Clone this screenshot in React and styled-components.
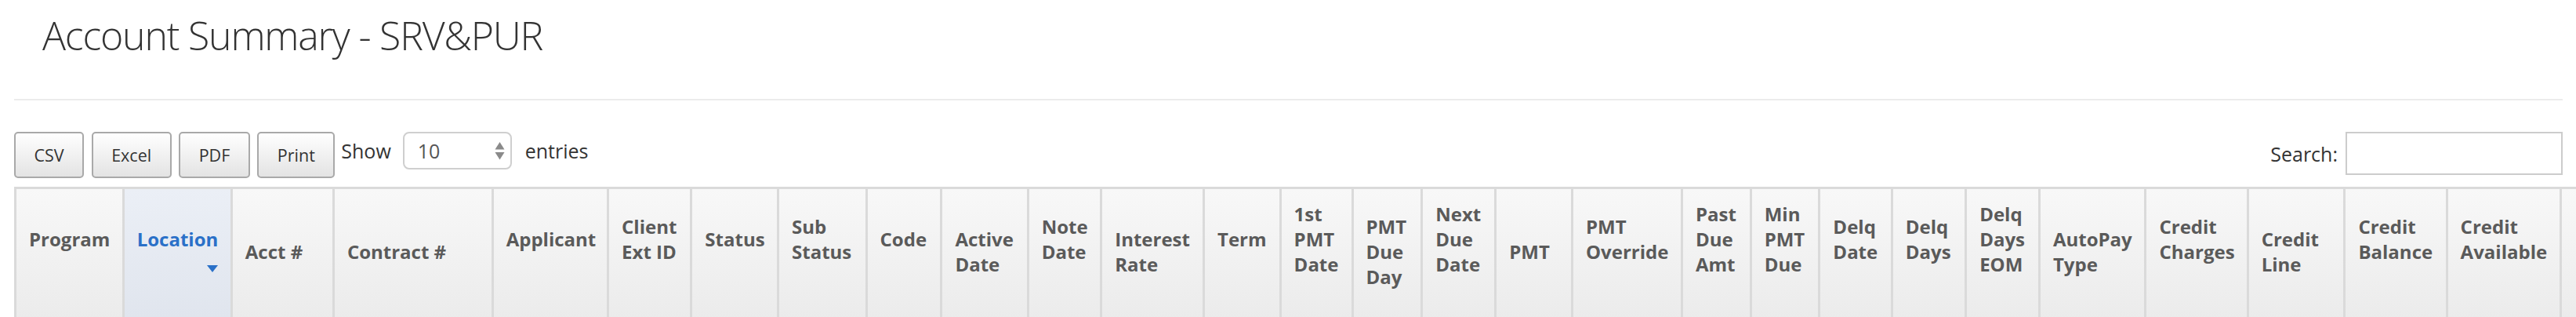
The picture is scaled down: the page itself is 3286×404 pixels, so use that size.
import React from "react";
import styled, { createGlobalStyle } from "styled-components";

const GlobalStyle = createGlobalStyle`
  html, body {
    margin: 0;
    padding: 0;
    background: #ffffff;
    overflow: hidden;
  }
  body {
    font-family: "Open Sans", "Liberation Sans", sans-serif;
    color: #333333;
  }
`;

const Page = styled.div`
  padding: 0 17px 0 18px;
`;

const Title = styled.h1`
  margin: 11px 0 0;
  padding-left: 36px;
  font-size: 50px;
  font-weight: 300;
  letter-spacing: -1.2px;
  line-height: 68px;
  color: #333333;
`;

const Divider = styled.hr`
  margin: 47px 0 0;
  height: 0;
  border: 0;
  border-top: 2px solid #ececec;
`;

const Toolbar = styled.div`
  display: flex;
  justify-content: space-between;
  align-items: flex-start;
  margin-top: 40px;
`;

const LeftTools = styled.div`
  display: flex;
  align-items: flex-start;
`;

const ButtonGroup = styled.div`
  display: flex;
  gap: 9.5px;
`;

const ExportButton = styled.button`
  height: 59px;
  padding: 0 23.5px;
  border: 2px solid #a9a9a9;
  border-radius: 5px;
  background: linear-gradient(to bottom, #ffffff, #e3e3e3);
  font-family: "Open Sans", sans-serif;
  font-size: 21.5px;
  color: #333333;
  cursor: pointer;
`;

const LengthControl = styled.label`
  display: flex;
  align-items: center;
  margin-left: 8px;
  font-size: 25px;
  color: #333333;
`;

const SelectWrap = styled.span`
  position: relative;
  display: inline-block;
  margin: 0 17px 0 15px;
`;

const Select = styled.select`
  appearance: none;
  -webkit-appearance: none;
  width: 139px;
  height: 48px;
  padding: 0 0 0 17px;
  border: 2px solid #cfcfcf;
  border-radius: 8px;
  background: #ffffff;
  font-family: "Open Sans", sans-serif;
  font-size: 25px;
  color: #555555;
  outline: none;
`;

const SpinIcon = styled.svg`
  position: absolute;
  left: 117px;
  top: 13px;
  pointer-events: none;
`;

const SearchControl = styled.label`
  display: flex;
  align-items: center;
  gap: 10px;
  font-size: 25px;
  color: #333333;
`;

const SearchInput = styled.input`
  width: 277px;
  height: 55px;
  box-sizing: border-box;
  border: 2px solid #cccccc;
  border-radius: 0;
  background: #ffffff;
  font-family: "Open Sans", sans-serif;
  font-size: 25px;
  outline: none;
`;

const HeaderGrid = styled.div`
  display: grid;
  grid-template-columns: ${(p) => p.$cols};
  width: max-content;
  margin-top: 11px;
  border-top: 3px solid #dadada;
`;

const HeaderCell = styled.div`
  position: relative;
  box-sizing: border-box;
  height: 180px;
  padding: 0 8px 53px 16px;
  border-left: 3px solid #dadada;
  display: flex;
  flex-direction: column;
  justify-content: center;
  background: ${(p) =>
    p.$sorted
      ? "linear-gradient(to bottom, #ebeff6, #dfe4ed)"
      : "linear-gradient(to bottom, #f8f8f8, #eaeaea)"};
  color: ${(p) => (p.$sorted ? "#2a70c8" : "#5a5a5a")};
  font-size: 24px;
  font-weight: 700;
  line-height: 32px;
  white-space: nowrap;
`;

const Label = styled.div`
  padding-top: ${(p) => p.$offset * 32}px;
`;

const Line = styled.div``;

const SortArrow = styled.span`
  position: absolute;
  right: 16px;
  top: 97px;
  width: 0;
  height: 0;
  border-left: 7.5px solid transparent;
  border-right: 7.5px solid transparent;
  border-top: 9px solid #2a70c8;
`;

const columns = [
  { w: 137.7, lines: ["Program"] },
  { w: 138.1, lines: ["Location"], sorted: true },
  { w: 130.1, lines: ["Acct #"], offset: 1 },
  { w: 202.8, lines: ["Contract #"], offset: 1 },
  { w: 147.4, lines: ["Applicant"] },
  { w: 106.3, lines: ["Client", "Ext ID"] },
  { w: 110.7, lines: ["Status"] },
  { w: 112.5, lines: ["Sub", "Status"] },
  { w: 95.9, lines: ["Code"] },
  { w: 110.2, lines: ["Active", "Date"], offset: 1 },
  { w: 93.6, lines: ["Note", "Date"] },
  { w: 130.8, lines: ["Interest", "Rate"], offset: 1 },
  { w: 97.6, lines: ["Term"] },
  { w: 91.9, lines: ["1st", "PMT", "Date"] },
  { w: 88.8, lines: ["PMT", "Due", "Day"], offset: 1 },
  { w: 93.9, lines: ["Next", "Due", "Date"] },
  { w: 97.8, lines: ["PMT"], offset: 1 },
  { w: 140, lines: ["PMT", "Override"] },
  { w: 87.7, lines: ["Past", "Due", "Amt"] },
  { w: 87.7, lines: ["Min", "PMT", "Due"] },
  { w: 92.4, lines: ["Delq", "Date"] },
  { w: 94.4, lines: ["Delq", "Days"] },
  { w: 93.8, lines: ["Delq", "Days", "EOM"] },
  { w: 135.5, lines: ["AutoPay", "Type"], offset: 1 },
  { w: 130.2, lines: ["Credit", "Charges"] },
  { w: 123.8, lines: ["Credit", "Line"], offset: 1 },
  { w: 130.2, lines: ["Credit", "Balance"] },
  { w: 145, lines: ["Credit", "Available"] },
  { w: 160, lines: [] },
];

export default function App() {
  const cols = columns.map((c) => `${c.w}px`).join(" ");
  return (
    <>
      <GlobalStyle />
      <Page>
        <Title>Account Summary - SRV&amp;PUR</Title>
        <Divider />
        <Toolbar>
          <LeftTools>
            <ButtonGroup>
              <ExportButton>CSV</ExportButton>
              <ExportButton>Excel</ExportButton>
              <ExportButton>PDF</ExportButton>
              <ExportButton>Print</ExportButton>
            </ButtonGroup>
            <LengthControl>
              Show
              <SelectWrap>
                <Select defaultValue="10">
                  <option value="10">10</option>
                  <option value="25">25</option>
                  <option value="50">50</option>
                  <option value="100">100</option>
                </Select>
                <SpinIcon width="13" height="23" viewBox="0 0 13 23">
                  <path d="M6.5 0 L12.5 9.5 L0.5 9.5 Z" fill="#8a8a8a" />
                  <path d="M0.5 13 L12.5 13 L6.5 22.5 Z" fill="#8a8a8a" />
                </SpinIcon>
              </SelectWrap>
              entries
            </LengthControl>
          </LeftTools>
          <SearchControl>
            Search:
            <SearchInput type="search" />
          </SearchControl>
        </Toolbar>
        <HeaderGrid $cols={cols}>
          {columns.map((c, i) => (
            <HeaderCell key={i} $sorted={c.sorted}>
              <Label $offset={c.offset || 0}>
                {c.lines.map((l) => (
                  <Line key={l}>{l}</Line>
                ))}
              </Label>
              {c.sorted && <SortArrow />}
            </HeaderCell>
          ))}
        </HeaderGrid>
      </Page>
    </>
  );
}
